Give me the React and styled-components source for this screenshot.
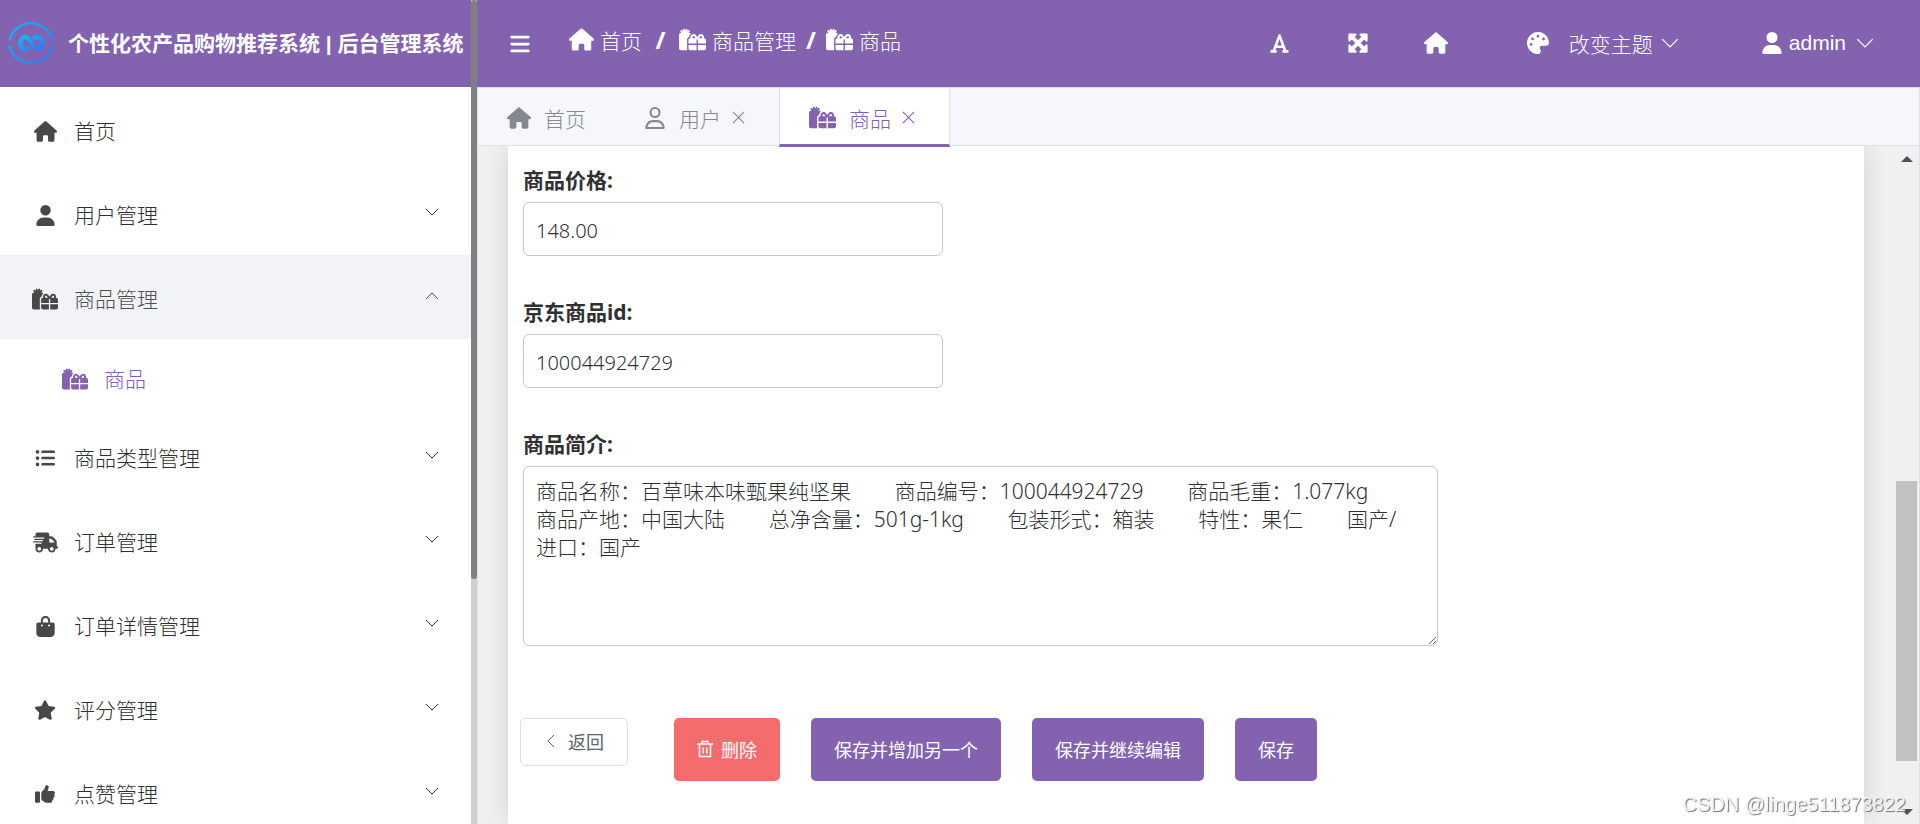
import { useState } from "react";
import styled, { createGlobalStyle, css } from "styled-components";
import {
  FaHouse, FaUser, FaRegUser, FaGifts, FaListUl, FaTruckFast, FaBagShopping,
  FaStar, FaThumbsUp, FaBars, FaFont, FaMaximize, FaPalette,
} from "react-icons/fa6";

const purple = "#8362b0";
const sans = `"Noto Sans", "Noto Sans CJK SC", sans-serif`;
const arial = `"Liberation Sans", "Noto Sans CJK SC", sans-serif`;

const GlobalStyle = createGlobalStyle`
  *{
    box-sizing: border-box;
  }

  body{
    margin: 0;
    font-family: ${sans};
    font-size: 21px;
    font-weight: 300;
    color: #303133;
    background-color: #f0f0f0;
  }

  button, input, textarea{
    font: inherit;
    color: inherit;
  }

  button{
    padding: 0;
    border: none;
    background: none;
    cursor: pointer;
  }

  svg{
    display: block;
    flex: none;
  }
`;

const Page = styled.div`
  display: flex;
  height: 100vh;
  overflow: hidden;
`;

const Sidebar = styled.aside`
  display: flex;
  flex: none;
  width: 477px;
  background-color: white;
`;

const SidebarBody = styled.div`
  flex: 1;
  min-width: 0;
  overflow: hidden;
`;

const SideTrack = styled.div`
  width: 6px;
  background-color: #d0d0d0;
`;

const SideThumb = styled.div`
  height: 579px;
  border-radius: 3px;
  background-color: #808080;
`;

const Brand = styled.div`
  display: flex;
  align-items: center;
  gap: 14px;
  height: 87px;
  padding: 0 0 2px 8px;
  background-color: ${purple};
  color: white;
  font-family: ${arial};
  font-weight: 700;
  white-space: nowrap;

  span{
    padding-bottom: 2px;
  }
`;

const MenuItem = styled.button`
  display: flex;
  align-items: center;
  width: 100%;
  height: ${(props) => props.$sub ? "75px" : "84px"};
  padding: 4px 32px 0 ${(props) => props.$sub ? "60px" : "30px"};
  background-color: ${(props) => props.$open ? "#f2f3f7" : "white"};
  color: ${(props) => props.$sub ? purple : props.$open ? "#505050" : "#303030"};

  & > svg{
    margin-bottom: 6px;
  }
`;

const MenuIcon = styled.span`
  display: flex;
  justify-content: center;
  width: 30px;
  margin-right: 14px;
  color: ${(props) => props.$sub ? purple : "#484848"};
`;

const MenuText = styled.span`
  flex: 1;
  padding-bottom: 2px;
  text-align: left;
`;

const Main = styled.div`
  display: flex;
  flex-direction: column;
  flex: 1;
  min-width: 0;
`;

const Header = styled.header`
  display: flex;
  align-items: center;
  flex: none;
  height: 87px;
  padding: 0 46px 0 32px;
  background-color: ${purple};
  color: white;
`;

const Crumbs = styled.nav`
  display: flex;
  align-items: center;
  gap: 6px;
  flex: 1;
  margin: 0 0 8px 38px;
`;

const Crumb = styled.a`
  display: flex;
  align-items: center;
  gap: 6px;
  color: white;
  text-decoration: none;
`;

const Slash = styled.span`
  width: ${(props) => props.$wide ? "25px" : "18px"};
  text-align: center;
  font-size: 24px;
  font-weight: 700;
`;

const Tools = styled.div`
  display: flex;
  align-items: center;
  padding-bottom: 1px;
  font-family: ${arial};
`;

const ToolIcon = styled.button`
  display: flex;
  justify-content: center;
  width: 78px;
`;

const ThemeButton = styled.button`
  display: flex;
  align-items: center;
  gap: 8px;
  margin-left: 52px;

  svg:first-child{
    margin-right: 12px;
  }
`;

const UserButton = styled.button`
  display: flex;
  align-items: center;
  gap: 6px;
  margin-left: 82px;

  svg:last-child{
    margin-left: 4px;
  }
`;

const Tabs = styled.div`
  position: relative;
  z-index: 1;
  display: flex;
  flex: none;
  height: 59px;
  border: 1px solid #dfe1ea;
  background-color: #f5f7fb;
`;

const Tab = styled.div`
  display: flex;
  align-items: center;
  gap: 11px;
  height: 59px;
  padding: 0 ${(props) => props.$closable ? "34px" : "29px"} 0 29px;
  color: #85888f;
  ${(props) => props.$active && css`
    padding-top: 3px;
    border: 1px solid #dfe1ea;
    border-width: 0 1px;
    border-bottom: 3px solid ${purple};
    background-color: white;
    color: ${purple};
  `}

  button{
    display: flex;
    align-items: center;
    gap: 13px;
  }
`;

const Content = styled.div`
  display: flex;
  flex: 1;
  min-height: 0;
  border-left: 1px solid #dfe1ea;
  border-right: 1px solid #dfe1ea;
  overflow: hidden;
`;

const Card = styled.main`
  flex: 1;
  min-width: 0;
  margin: 0 31px 0 30px;
  padding: 18px 15px;
  background-color: white;
  box-shadow: 0 0 24px rgba(0, 0, 0, 0.12);
`;

const Scroll = styled.div`
  display: flex;
  flex-direction: column;
  align-items: center;
  justify-content: space-between;
  width: 24px;
  padding: 10px 1px 9px 0;
`;

const ScrollThumb = styled.div`
  width: 21px;
  height: 280px;
  margin-top: 271px;
  background-color: #c1c1c1;
`;

const Field = styled.div`
  display: flex;
  flex-direction: column;
  align-items: flex-start;
  gap: 6px;
  margin-bottom: 40px;

  label{
    font-weight: 700;
    line-height: 32px;
  }
`;

const Input = styled.input`
  width: 420px;
  height: 54px;
  padding: 2px 12px 0;
  border: 1px solid #c8c8c8;
  border-radius: 6px;
  background-color: white;
  font-size: 20px;

  &:focus{
    outline: none;
  }
`;

const Textarea = styled.textarea`
  width: 915px;
  height: 180px;
  padding: 10px 24px 10px 12px;
  border: 1px solid #c8c8c8;
  border-radius: 6px;
  line-height: 28px;

  &:focus{
    outline: none;
  }
`;

const Actions = styled.div`
  display: flex;
  align-items: flex-start;
  gap: 31px;
  margin-top: 72px;
`;

const Button = styled.button`
  display: flex;
  align-items: center;
  gap: 8px;
  height: 63px;
  padding: 0 23px 2px;
  border-radius: 5px;
  background-color: ${(props) => props.$danger ? "#f56c6c" : purple};
  color: white;
  font-size: 18px;
  font-weight: 400;
`;

const BackButton = styled(Button)`
  gap: 10px;
  height: 48px;
  margin: 0 15px 0 -3px;
  border: 1px solid #dcdfe6;
  background-color: white;
  color: #606266;
`;

const Watermark = styled.div`
  position: fixed;
  right: 14px;
  bottom: 8px;
  color: #f4f4f4;
  font-family: ${arial};
  font-size: 20px;
  text-shadow: 1px 1px 1px #707070;
`;

const Chevron = ({ size = 14, dir = "down" }) => {
  const d = { down: "M1 4l6 6 6-6", up: "M1 10l6-6 6 6", left: "M10 1L4 7l6 6" }[dir];
  return (
    <svg width={size} height={size} viewBox="0 0 14 14" fill="none" stroke="currentColor">
      <path d={d} />
    </svg>
  );
};

const Close = () => (
  <svg width="13" height="13" viewBox="0 0 14 14" fill="none" stroke="currentColor" strokeWidth="1.2">
    <path d="M1 1l12 12M13 1L1 13" />
  </svg>
);

const Trash = () => (
  <svg width="16" height="18" viewBox="0 0 16 18" fill="none" stroke="currentColor" strokeWidth="1.5">
    <path d="M0 4h16M2.500 4v12.500h11V4M5 4V1.500h6V4M6.300 7.500v6M9.700 7.500v6" />
  </svg>
);

const Logo = () => (
  <svg width="46" height="46" viewBox="0 0 46 46" fill="none">
    <defs>
      <linearGradient id="logo" x1="0" y1="0" x2="1" y2="1">
        <stop offset="0" stopColor="#18b4f5" />
        <stop offset="1" stopColor="#2b78f6" />
      </linearGradient>
    </defs>
    <g stroke="url(#logo)">
      <path d="M1.5 20.5a22 22 0 0 1 43 0M1.5 25.5a22 22 0 0 0 43 0" strokeWidth="2.4" />
      <path
        d="M20.500 27C18.500 29.500 16.500 29.500 15 28.500C11.500 26.500 11.500 19.500 15.500 17.500C18.500 16 20.500 18.500 23 22.500C25.500 27 28 29.500 31 28.500C36 26.500 35.500 18.500 31 17.300C28.500 16.500 26.500 17.500 25 19.500"
        strokeWidth="4.4"
      />
    </g>
  </svg>
);

const menus = [
  { text: "首页", icon: FaHouse, size: 23, plain: true },
  { text: "用户管理", icon: FaUser, size: 21 },
  { text: "商品管理", icon: FaGifts, size: 26, children: ["商品"] },
  { text: "商品类型管理", icon: FaListUl, size: 20 },
  { text: "订单管理", icon: FaTruckFast, size: 25 },
  { text: "订单详情管理", icon: FaBagShopping, size: 21 },
  { text: "评分管理", icon: FaStar, size: 22 },
  { text: "点赞管理", icon: FaThumbsUp, size: 20 },
];

const intro = [
  ["商品名称：百草味本味甄果纯坚果", "商品编号：100044924729", "商品毛重：1.077kg"],
  ["商品产地：中国大陆", "总净含量：501g-1kg", "包装形式：箱装", "特性：果仁", "国产/进口：国产"],
].map((line) => line.join(" ".repeat(8))).join("\n");

function App(){
  const [open, setOpen] = useState("商品管理");
  const [price, setPrice] = useState("148.00");
  const [jdId, setJdId] = useState("100044924729");
  const [desc, setDesc] = useState(intro);

  return (
    <Page>
      <GlobalStyle />
      <Sidebar>
        <SidebarBody>
          <Brand>
            <Logo />
            <span>个性化农产品购物推荐系统 | 后台管理系统</span>
          </Brand>
          <nav>
            {menus.map(({ text, icon: Icon, size, plain, children }) =>
              <div key={text}>
                <MenuItem
                  $open={open === text}
                  onClick={() => setOpen(open === text ? "" : text)}
                >
                  <MenuIcon><Icon size={size} /></MenuIcon>
                  <MenuText>{text}</MenuText>
                  {!plain && <Chevron dir={open === text ? "up" : "down"} />}
                </MenuItem>
                {open === text && children?.map((c) =>
                  <MenuItem key={c} $sub>
                    <MenuIcon $sub><FaGifts size={26} /></MenuIcon>
                    <MenuText>{c}</MenuText>
                  </MenuItem>
                )}
              </div>
            )}
          </nav>
        </SidebarBody>
        <SideTrack><SideThumb /></SideTrack>
      </Sidebar>
      <Main>
        <Header>
          <button aria-label="menu"><FaBars size={22} /></button>
          <Crumbs>
            <Crumb href="#home"><FaHouse size={25} />首页</Crumb>
            <Slash $wide>/</Slash>
            <Crumb href="#goods"><FaGifts size={27} />商品管理</Crumb>
            <Slash>/</Slash>
            <Crumb href="#product"><FaGifts size={27} />商品</Crumb>
          </Crumbs>
          <Tools>
            <ToolIcon aria-label="font"><FaFont size={21} /></ToolIcon>
            <ToolIcon aria-label="fullscreen"><FaMaximize size={22} /></ToolIcon>
            <ToolIcon aria-label="home"><FaHouse size={24} /></ToolIcon>
            <ThemeButton><FaPalette size={22} />改变主题<Chevron size={18} /></ThemeButton>
            <UserButton><FaUser size={22} />admin<Chevron size={18} /></UserButton>
          </Tools>
        </Header>
        <Tabs>
          <Tab><button><FaHouse size={24} />首页</button></Tab>
          <Tab $closable><button><FaRegUser size={22} />用户</button><Close /></Tab>
          <Tab $closable $active><button><FaGifts size={27} />商品</button><Close /></Tab>
        </Tabs>
        <Content>
          <Card>
            <Field>
              <label htmlFor="price">商品价格:</label>
              <Input id="price" value={price} onChange={(e) => setPrice(e.target.value)} />
            </Field>
            <Field>
              <label htmlFor="jdId">京东商品id:</label>
              <Input id="jdId" value={jdId} onChange={(e) => setJdId(e.target.value)} />
            </Field>
            <Field>
              <label htmlFor="desc">商品简介:</label>
              <Textarea id="desc" value={desc} onChange={(e) => setDesc(e.target.value)} />
            </Field>
            <Actions>
              <BackButton><Chevron dir="left" />返回</BackButton>
              <Button $danger><Trash />删除</Button>
              <Button>保存并增加另一个</Button>
              <Button>保存并继续编辑</Button>
              <Button>保存</Button>
            </Actions>
          </Card>
          <Scroll>
            <svg width="12" height="6" viewBox="0 0 12 6"><path d="M0 6l6-6 6 6z" fill="#505050" /></svg>
            <ScrollThumb />
            <svg width="12" height="6" viewBox="0 0 12 6"><path d="M0 0l6 6 6-6z" fill="#505050" /></svg>
          </Scroll>
        </Content>
      </Main>
      <Watermark>CSDN @linge511873822</Watermark>
    </Page>
  );
}

export default App;
